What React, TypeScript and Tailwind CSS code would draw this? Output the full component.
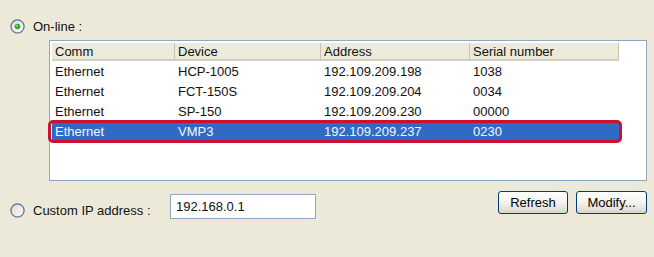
import React from 'react';

type Device = { comm: string; device: string; address: string; serial: string; selected?: boolean };

const devices: Device[] = [
  { comm: 'Ethernet', device: 'HCP-1005', address: '192.109.209.198', serial: '1038' },
  { comm: 'Ethernet', device: 'FCT-150S', address: '192.109.209.204', serial: '0034' },
  { comm: 'Ethernet', device: 'SP-150', address: '192.109.209.230', serial: '00000' },
  { comm: 'Ethernet', device: 'VMP3', address: '192.109.209.237', serial: '0230', selected: true },
];

const Radio = ({ checked }: { checked?: boolean }) => (
  <svg width="15" height="15" viewBox="0 0 15 15" className="shrink-0">
    <defs>
      <linearGradient id={checked ? 'rg1' : 'rg2'} x1="0" y1="0" x2="1" y2="1">
        <stop offset="0" stopColor="#d8d6cc" />
        <stop offset="1" stopColor="#ffffff" />
      </linearGradient>
    </defs>
    <circle cx="7.5" cy="7.5" r="6.6" fill={`url(#${checked ? 'rg1' : 'rg2'})`} stroke="#56718f" strokeWidth="1.2" />
    {checked && <circle cx="7.5" cy="7.5" r="2.8" fill="#2fa82f" />}
    {checked && <circle cx="6.8" cy="6.8" r="1" fill="#8ee08e" />}
  </svg>
);

const XpButton = ({ label, width }: { label: string; width: string }) => (
  <button
    className={`${width} h-[23px] rounded-[3px] border border-[#003c74] bg-gradient-to-b from-[#ffffff] via-[#f4f3ee] to-[#d9d5c7] text-[13px] text-black leading-none flex items-center justify-center`}
  >
    {label}
  </button>
);

const cols = ['w-[123px]', 'w-[146px]', 'w-[149px]', 'w-[149px]'];

export default function App() {
  return (
    <div className="w-[654px] h-[257px] bg-[#ece9d8] font-['Liberation_Sans',Arial,sans-serif] text-[13px] text-[#111] overflow-hidden">
      <div className="pt-[19px] pl-[10px] flex items-center gap-[8px] h-[33px]">
        <Radio checked />
        <span className="leading-none">On-line :</span>
      </div>

      <div className="ml-[49px] mt-[7px] w-[598px] h-[141px] border border-[#8fa7c0] bg-white pt-[2px] px-[2px]">
        <div className="flex h-[18px] bg-[#ebeadb] border-b-[2px] border-[#d3cfbe] w-[567px]">
          {['Comm', 'Device', 'Address', 'Serial number'].map((h, i) => (
            <div
              key={h}
              className={`${cols[i]} pl-[3px] flex items-center border-r border-[#c7c4b3] leading-none`}
            >
              {h}
            </div>
          ))}
        </div>
        <div className="pt-[1px]">
          {devices.map((d) => (
            <div
              key={d.device}
              className={`relative flex h-[20px] w-[567px] items-center ${d.selected ? 'bg-[#316ac5] text-[#f4f8ff]' : ''}`}
            >
              <div className={`${cols[0]} pl-[3px]`}>{d.comm}</div>
              <div className={`${cols[1]} pl-[3px]`}>{d.device}</div>
              <div className={`${cols[2]} pl-[3px]`}>{d.address}</div>
              <div className={`${cols[3]} pl-[3px]`}>{d.serial}</div>
              {d.selected && (
                <div className="absolute -left-[4px] -right-[3px] -top-[2px] -bottom-[1px] border-[3px] border-[#cc1030] rounded-[5px]" />
              )}
            </div>
          ))}
        </div>
      </div>

      <div className="flex items-start mt-[10px] pr-[7px]">
        <div className="pl-[10px] mt-[12px] flex items-center gap-[8px] w-[170px] h-[15px]">
          <Radio />
          <span className="leading-none whitespace-nowrap">Custom IP address :</span>
        </div>
        <div className="mt-[3px] w-[146px] h-[25px] border border-[#8fa7c0] bg-white pl-[5px] flex items-center leading-none">
          192.168.0.1
        </div>
        <div className="ml-auto flex gap-[8px]">
          <XpButton label="Refresh" width="w-[70px]" />
          <XpButton label="Modify..." width="w-[71px]" />
        </div>
      </div>
    </div>
  );
}
